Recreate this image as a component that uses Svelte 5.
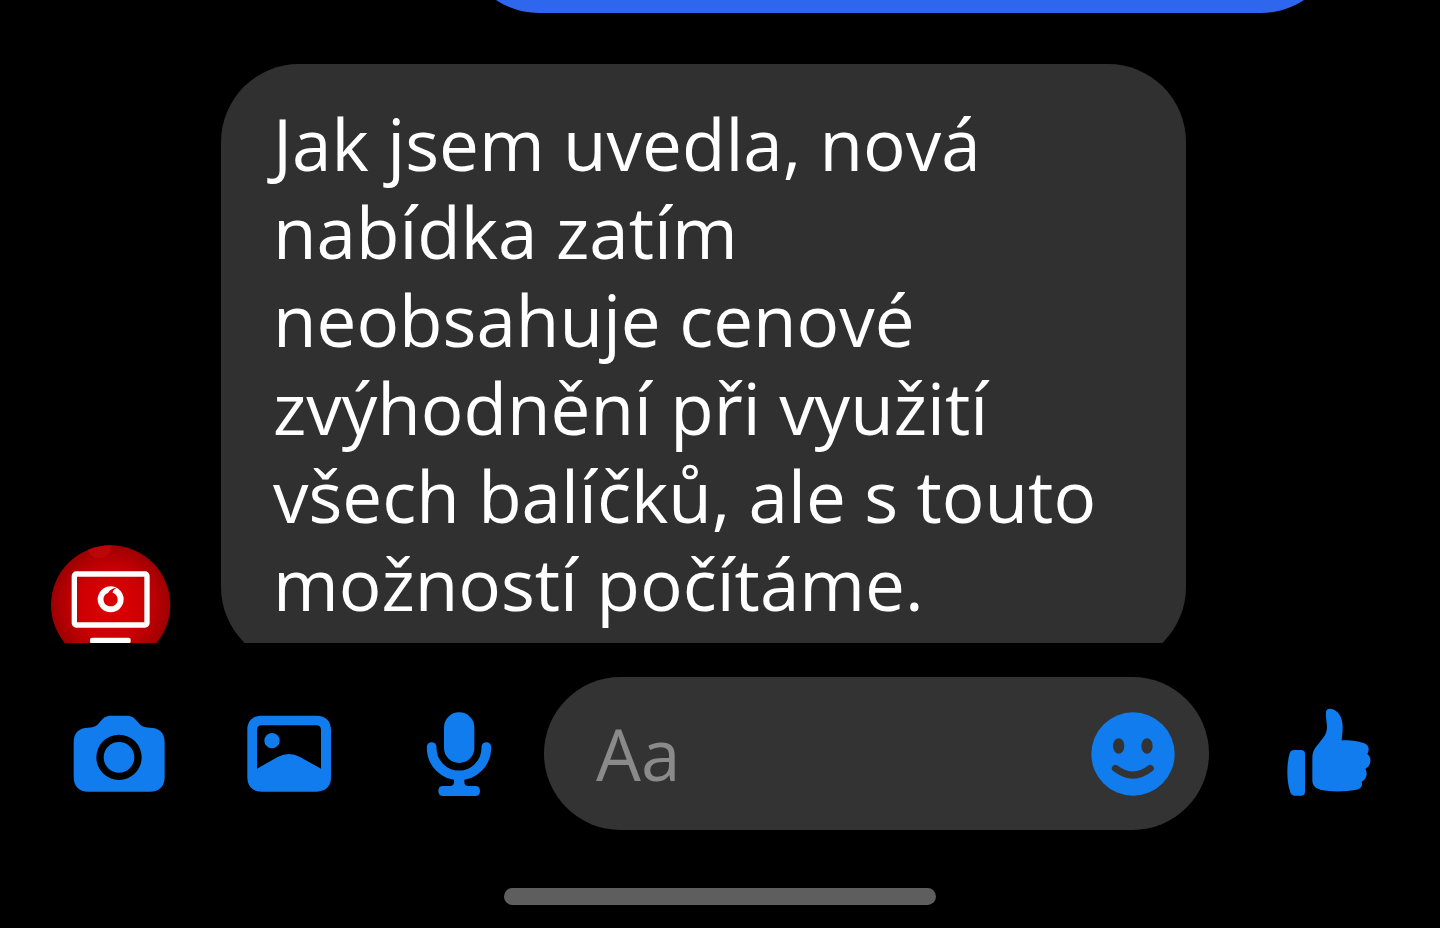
<script lang="ts">
  let draft: string = $state('')

  const message: string =
    'Jak jsem uvedla, nová nabídka zatím neobsahuje cenové zvýhodnění při využití všech balíčků, ale s touto možností počítáme.'
</script>

<div class="chat">
  <main class="thread">
    <div class="bubble bubble--sent"></div>

    <div class="row">
      <svg class="avatar" viewBox="33 30 360 360" aria-hidden="true">
        <defs>
          <radialGradient id="avatar-red" cx="0.5" cy="0.5" r="0.52">
            <stop offset="0" stop-color="#e00004" />
            <stop offset="0.55" stop-color="#cc0003" />
            <stop offset="1" stop-color="#980002" />
          </radialGradient>
          <clipPath id="avatar-circle">
            <circle cx="212" cy="210" r="179" />
          </clipPath>
        </defs>
        <g clip-path="url(#avatar-circle)">
          <rect x="33" y="30" width="360" height="360" fill="url(#avatar-red)" />
          <circle cx="178" cy="34" r="36" fill="#c4080a" opacity="0.7" />
          <path d="M240 20 L340 80 L400 80 L400 20 Z" fill="#7c0002" opacity="0.4" />
        </g>
        <rect x="103" y="117" width="218" height="153" rx="6" fill="none" stroke="#fff" stroke-width="16" />
        <rect x="150" y="308" width="122" height="17" rx="6" fill="#fff" />
        <circle cx="212" cy="193" r="39" fill="#fff" />
        <path
          d="M231 158 C218 159 208 165 204 174 C193 178 189 188 191 197 C193 208 202 214 213 214 C225 213 233 204 233 194 C233 183 227 176 218 173 C218 167 223 161 231 158 Z"
          fill="#d80004"
        />
      </svg>
      <p class="bubble bubble--received">{message}</p>
    </div>
  </main>

  <form class="composer" onsubmit={(e) => e.preventDefault()}>
    <button class="action" type="button" aria-label="Camera">
      <svg viewBox="27 12 300 300">
        <path
          fill-rule="evenodd"
          d="M84 83 C104 83 110 78 119 67 C130 53 137 47 153 47 H200 C216 47 223 53 234 67 C243 78 250 83 270 83 C298 83 314 99 314 126 V231 C314 259 298 275 270 275 H85 C57 275 41 259 41 231 V126 C41 99 57 83 84 83 Z M177 104 A68 68 0 1 0 177 240 A68 68 0 1 0 177 104 Z"
        />
        <circle cx="177" cy="172" r="46" />
      </svg>
    </button>
    <button class="action" type="button" aria-label="Gallery">
      <svg viewBox="12 12 300 300">
        <path
          fill-rule="evenodd"
          d="M80 47 H245 C272 47 288 63 288 90 V232 C288 259 272 275 245 275 H80 C53 275 37 259 37 232 V90 C37 63 53 47 80 47 Z M80 76 Q66 76 66 90 V206 L128 171 Q162 153 195 171 L258 206 V90 Q258 76 244 76 Z"
        />
        <circle cx="111" cy="122" r="23" />
      </svg>
    </button>
    <button class="action" type="button" aria-label="Voice message">
      <svg viewBox="-18 12 300 300">
        <rect x="87" y="37" width="91" height="152" rx="45" />
        <path
          d="M50 141 V144 A82 82 0 0 0 214 144 V141"
          fill="none"
          stroke="currentColor"
          stroke-width="29"
          stroke-linecap="round"
        />
        <path d="M117 232 H148 V246 Q148 258 160 258 H181 Q195 258 195 273 Q195 288 181 288 H84 Q70 288 70 273 Q70 258 84 258 H105 Q117 258 117 246 Z" />
      </svg>
    </button>

    <div class="field">
      <input type="text" placeholder="Aa" aria-label="Message" bind:value={draft} />
      <button class="emoji" type="button" aria-label="Emoji">
        <svg viewBox="35 35 252 252">
          <circle cx="161" cy="161" r="125" />
          <g class="face">
            <ellipse cx="118" cy="137" rx="17" ry="23" />
            <ellipse cx="203" cy="137" rx="17" ry="23" />
            <path d="M108 204 Q161 245 213 204" />
          </g>
        </svg>
      </button>
    </div>

    <button class="action" type="button" aria-label="Like">
      <svg viewBox="12 12 300 300">
        <path d="M58 150 H78 Q90 150 90 162 V275 Q90 287 78 287 H58 Q50 287 46 277 Q37 252 37 216 Q37 184 44 160 Q47 150 58 150 Z" />
        <path
          d="M153 36 C154 28 161 25 170 27 C190 32 203 52 203 80 C203 96 201 108 200 121 C228 120 256 124 272 132 C283 138 283 152 277 162 C288 170 290 188 279 201 C277 202 274 205 271 207 C279 220 275 238 260 245 C264 259 256 267 240 270 C215 275 165 276 139 270 C121 266 112 257 112 241 V174 C112 154 119 145 133 128 C149 109 155 101 156 82 C156 66 151 50 153 36 Z"
        />
      </svg>
    </button>
  </form>

  <div class="home-bar"></div>
</div>

<style>
  :global(body) {
    margin: 0;
    background-color: #000;
  }

  .chat {
    box-sizing: border-box;
    height: 100vh;
    padding-bottom: 23px;
    display: flex;
    flex-direction: column;
    overflow: hidden;
    background-color: #000;
    font-family: 'Open Sans', 'Noto Sans', sans-serif;
  }

  .thread {
    flex: 1;
    min-height: 0;
    display: flex;
    flex-direction: column;
    justify-content: flex-end;
    gap: 51px;
    overflow: hidden;
  }

  .bubble {
    box-sizing: border-box;
    flex-shrink: 0;
    margin: 0;
    padding: 36px 60px 37px 52px;
    border-radius: 78px;
    font-size: 71px;
    line-height: 88px;
  }

  .bubble--sent {
    align-self: flex-end;
    width: 61%;
    min-height: 160px;
    margin-right: 101px;
    background-color: #2e66ee;
  }

  .bubble--received {
    width: 67vw;
    background-color: #303030;
    color: #fff;
  }

  .row {
    display: flex;
    align-items: flex-end;
    flex-shrink: 0;
    gap: 50px;
    margin-bottom: -22px;
    padding-left: 51px;
  }

  .avatar {
    display: block;
    flex-shrink: 0;
    width: 120px;
    height: 120px;
  }

  .composer {
    display: flex;
    align-items: center;
    gap: 70px;
    padding: 34px 61px 58px 69px;
  }

  button {
    display: block;
    flex-shrink: 0;
    padding: 0;
    border: none;
    background: none;
    color: #107cee;
    cursor: pointer;
  }

  button svg {
    display: block;
    width: 100%;
    height: 100%;
    fill: currentColor;
  }

  .action {
    width: 100px;
    height: 100px;
  }

  .field {
    box-sizing: border-box;
    flex: 1;
    min-width: 0;
    height: 153px;
    margin-left: -35px;
    padding: 0 34px 0 52px;
    display: flex;
    align-items: center;
    border-radius: 77px;
    background-color: #333;
  }

  input {
    flex: 1;
    min-width: 0;
    height: 88px;
    padding: 0;
    border: none;
    outline: none;
    background: none;
    color: #fff;
    font-family: inherit;
    font-size: 71px;
    line-height: 88px;
  }

  input::placeholder {
    color: #8a8a8a;
    opacity: 1;
  }

  .emoji {
    width: 84px;
    height: 84px;
  }

  .face {
    fill: #333;
  }

  .face path {
    fill: none;
    stroke: #333;
    stroke-width: 21;
    stroke-linecap: round;
  }

  .home-bar {
    align-self: center;
    width: 30%;
    height: 17px;
    border-radius: 9px;
    background-color: #5e5e5e;
  }
</style>
